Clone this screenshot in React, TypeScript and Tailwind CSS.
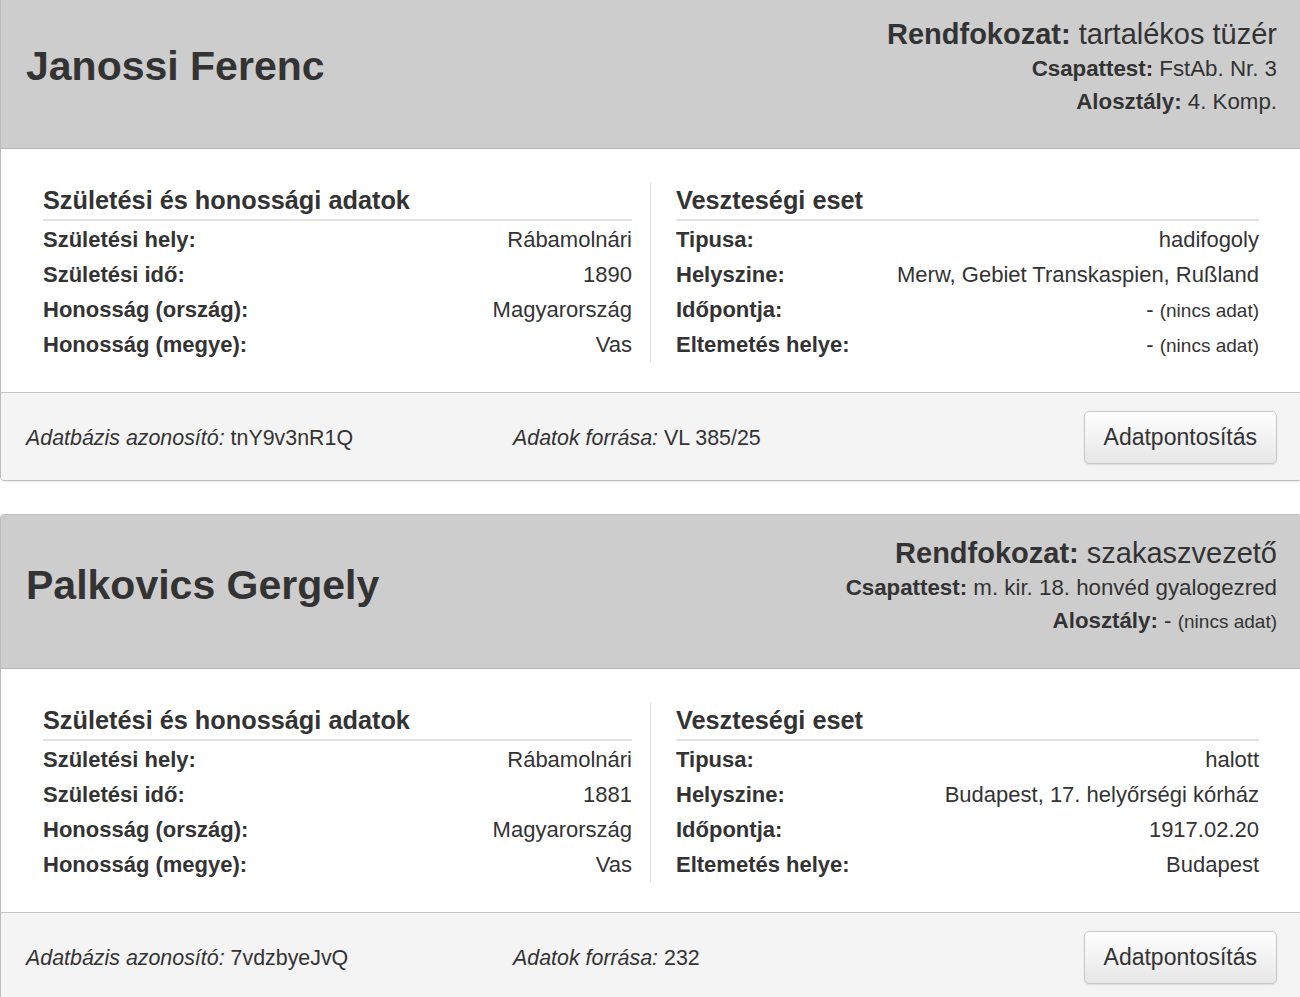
import React from 'react';

type Row = { label: string; value: string | null };

type Record = {
  name: string;
  rank: string;
  unit: string;
  subunit: string | null;
  birth: Row[];
  loss: Row[];
  dbId: string;
  source: string;
};

const records: Record[] = [
  {
    name: 'Janossi Ferenc',
    rank: 'tartalékos tüzér',
    unit: 'FstAb. Nr. 3',
    subunit: '4. Komp.',
    birth: [
      { label: 'Születési hely:', value: 'Rábamolnári' },
      { label: 'Születési idő:', value: '1890' },
      { label: 'Honosság (ország):', value: 'Magyarország' },
      { label: 'Honosság (megye):', value: 'Vas' },
    ],
    loss: [
      { label: 'Tipusa:', value: 'hadifogoly' },
      { label: 'Helyszine:', value: 'Merw, Gebiet Transkaspien, Rußland' },
      { label: 'Időpontja:', value: null },
      { label: 'Eltemetés helye:', value: null },
    ],
    dbId: 'tnY9v3nR1Q',
    source: 'VL 385/25',
  },
  {
    name: 'Palkovics Gergely',
    rank: 'szakaszvezető',
    unit: 'm. kir. 18. honvéd gyalogezred',
    subunit: null,
    birth: [
      { label: 'Születési hely:', value: 'Rábamolnári' },
      { label: 'Születési idő:', value: '1881' },
      { label: 'Honosság (ország):', value: 'Magyarország' },
      { label: 'Honosság (megye):', value: 'Vas' },
    ],
    loss: [
      { label: 'Tipusa:', value: 'halott' },
      { label: 'Helyszine:', value: 'Budapest, 17. helyőrségi kórház' },
      { label: 'Időpontja:', value: '1917.02.20' },
      { label: 'Eltemetés helye:', value: 'Budapest' },
    ],
    dbId: '7vdzbyeJvQ',
    source: '232',
  },
];

const NoData = () => (
  <span>
    - <span className="text-[19px]">(nincs adat)</span>
  </span>
);

const Section = ({ title, rows }: { title: string; rows: Row[] }) => (
  <div>
    <h3 className="text-[25.3px] font-bold leading-[34px] pb-[2px] border-b-2 border-[#e3e3e3]">{title}</h3>
    <div className="pt-[1px]">
      {rows.map((r) => (
        <div key={r.label} className="flex justify-between items-center h-[35px] text-[22px]">
          <span className="font-bold">{r.label}</span>
          <span>{r.value ?? <NoData />}</span>
        </div>
      ))}
    </div>
  </div>
);

const Card = ({ rec }: { rec: Record }) => (
  <div className="w-[1302px] border border-[#bdbdbd] rounded-[4px] overflow-hidden shadow-[0_1px_2px_rgba(0,0,0,0.08)]">
    {/* header */}
    <div className="flex justify-between items-center bg-[#cdcdcd] border-b border-[#b9b9b9] pl-[25px] pr-[24px] pt-[20px] pb-[30px]">
      <h1 className="text-[41px] font-bold leading-[48px] mb-[3px]">{rec.name}</h1>
      <div className="text-right">
        <div className="text-[29px] leading-[36px]">
          <b>Rendfokozat:</b> {rec.rank}
        </div>
        <div className="text-[22.3px] leading-[33px]">
          <b>Csapattest:</b> {rec.unit}
        </div>
        <div className="text-[22.3px] leading-[33px]">
          <b>Alosztály:</b> {rec.subunit ?? <NoData />}
        </div>
      </div>
    </div>

    {/* body */}
    <div className="bg-white px-[42px] pt-[34px] pb-[30px] flex">
      <div className="w-1/2 pr-[18px] border-r border-[#e0e0e0]">
        <Section title="Születési és honossági adatok" rows={rec.birth} />
      </div>
      <div className="w-1/2 pl-[25px]">
        <Section title="Veszteségi eset" rows={rec.loss} />
      </div>
    </div>

    {/* footer */}
    <div className="bg-[#f4f4f4] border-t border-[#c6c6c6] flex items-center pl-[25px] pr-[24px] h-[88px] text-[21.4px]">
      <div className="w-[487px] pt-[3px]">
        <i>Adatbázis azonosító:</i> {rec.dbId}
      </div>
      <div className="flex-1 pt-[3px]">
        <i>Adatok forrása:</i> {rec.source}
      </div>
      <button className="h-[53px] mt-[2px] px-[19px] text-[23px] text-[#333] rounded-[5px] border border-[#c8c8c8] bg-gradient-to-b from-white to-[#e6e6e6] shadow-[0_1px_2px_rgba(0,0,0,0.1)]">
        Adatpontosítás
      </button>
    </div>
  </div>
);

export default function App() {
  return (
    <div
      className="w-[1300px] h-[997px] overflow-hidden bg-white text-[#333]"
      style={{ fontFamily: '"Liberation Sans", Arial, sans-serif' }}
    >
      <div className="flex flex-col gap-[33px] mt-[-5px]">
        {records.map((r) => (
          <Card key={r.dbId} rec={r} />
        ))}
      </div>
    </div>
  );
}
